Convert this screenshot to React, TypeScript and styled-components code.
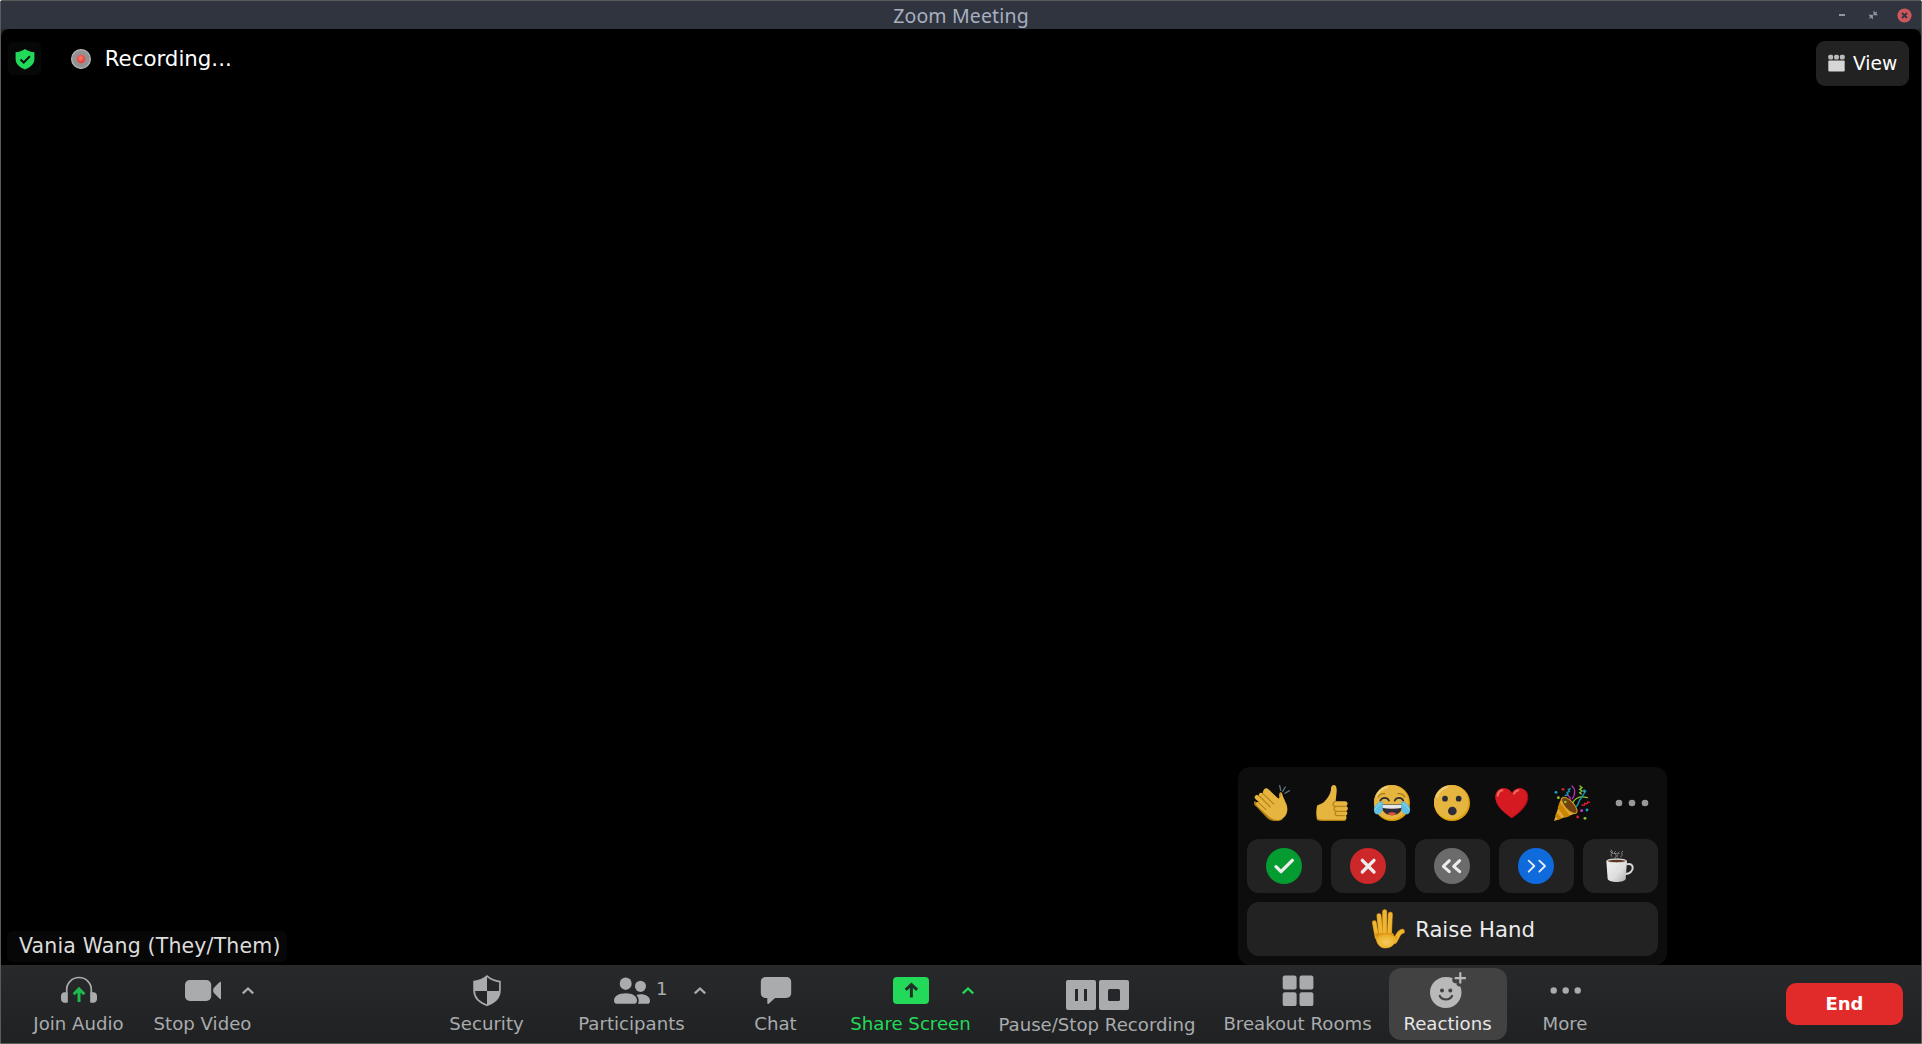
import React from 'react';
import styled, { createGlobalStyle } from 'styled-components';

const sans = '"DejaVu Sans", Verdana, sans-serif';
const GREY = '#a9abad';
const GREEN = '#23d959';

const GlobalStyle = createGlobalStyle`
  * { box-sizing: border-box; }
  body { margin: 0; background: #fff; overflow: hidden; }
  svg { display: block; flex: none; }
  button { font: inherit; color: inherit; border: 0; padding: 0; background: none; }
`;

const Window = styled.div`
  display: flex;
  flex-direction: column;
  width: 1922px;
  height: 1044px;
  border: 1px solid #5a5a5a;
  border-radius: 2px 2px 0 0;
  background: #26282a;
  font-family: ${sans};
  position: relative;
`;

const TitleBar = styled.header`
  display: grid;
  grid-template-columns: 1fr auto 1fr;
  align-items: center;
  height: 28px;
  flex: none;
  background: #30343f;
`;

const Title = styled.h1`
  grid-column: 2;
  margin: 0;
  padding-top: 1px;
  font: 400 19.5px/27px "Noto Sans", "Open Sans", sans-serif;
  letter-spacing: 0.15px;
  color: #a7b0c0;
`;

const WindowControls = styled.div`
  display: flex;
  justify-content: flex-end;
  align-items: center;
  gap: 17px;
  padding-right: 9px;
`;

const Stage = styled.main`
  flex: 1;
  display: flex;
  flex-direction: column;
  justify-content: space-between;
  background: #000;
  border-radius: 8px 8px 0 0;
`;

const StageTop = styled.div`
  display: flex;
  align-items: flex-start;
  padding: 12px 12px 0 7px;
`;

const ShieldBadge = styled.div`
  display: flex;
  align-items: center;
  justify-content: center;
  width: 33px;
  height: 33px;
  margin-top: 1px;
  border-radius: 5px;
  background: #060707;
`;

const RecordingStatus = styled.div`
  display: flex;
  align-items: center;
  gap: 13px;
  margin: 3px 0 0 30px;
  font-size: 21.33px;
  line-height: 30px;
  color: #fff;
`;

const RecordingText = styled.span`
  padding-left: 0.7px;
`;

const ViewButton = styled.button`
  display: flex;
  align-items: center;
  gap: 8px;
  width: 93px;
  height: 45px;
  margin-left: auto;
  padding-left: 12px;
  border-radius: 9px;
  background: #222;
  color: #fff;
  font-size: 18.67px;

  svg { margin-bottom: 1px; }
`;

const NameTag = styled.div`
  align-self: flex-start;
  height: 31px;
  margin: 0 0 3px 6px;
  padding: 0 6px 0 12px;
  border-radius: 6px;
  background: #070707;
  color: #dcdcdc;
  font-size: 20.5px;
  line-height: 31px;
  letter-spacing: 0.16px;
`;

const Toolbar = styled.footer`
  display: flex;
  align-items: flex-start;
  flex: none;
  height: 78px;
  padding: 3px 18px 0 19px;
  background: linear-gradient(#28292b, #1f2122);
`;

const Item = styled.button<{ $w: number; $gap?: number; $active?: boolean; $tone?: string; $drop?: number }>`
  display: flex;
  flex-direction: column;
  align-items: center;
  flex: none;
  width: ${p => p.$w}px;
  height: 72px;
  margin-left: ${p => p.$gap ?? 0}px;
  padding-top: ${p => 4 + (p.$drop ?? 0)}px;
  border-radius: 12px;
  background: ${p => (p.$active ? '#424242' : 'transparent')};
  color: ${p => p.$tone ?? '#a9abad'};
`;

const IconRow = styled.span`
  display: grid;
  grid-template-columns: 1fr auto 1fr;
  align-items: center;
  width: 100%;
  height: 36px;
`;

const IconSlot = styled.span`
  grid-column: 2;
`;

const Aside = styled.span<{ $pad: number }>`
  display: flex;
  align-items: center;
  padding-left: ${p => p.$pad}px;
`;

const Count = styled.span`
  width: 38px;
  font-size: 18.2px;
  line-height: 36px;
  margin-top: -3px;
  text-align: left;
`;

const Label = styled.span<{ $tight?: boolean }>`
  margin-top: ${p => (p.$tight ? 2 : 5)}px;
  padding-right: 1px;
  font-size: 18.15px;
  line-height: 22px;
  white-space: nowrap;
`;

const EndButton = styled.button`
  width: 117px;
  height: 42px;
  margin: 15px 0 0 auto;
  padding-bottom: 2px;
  border-radius: 10px;
  background: #e12a2a;
  color: #fff;
  font-size: 18px;
  font-weight: 700;
`;

const ReactionsMenu = styled.section`
  position: absolute;
  left: 1237px;
  top: 766px;
  width: 429px;
  height: 198px;
  padding: 9px;
  display: flex;
  flex-direction: column;
  gap: 9px;
  border-radius: 12px;
  background: #0d0d0d;
`;

const EmojiRow = styled.div`
  display: flex;
  justify-content: space-between;
  align-items: center;
  height: 54px;
  padding: 0 8px 0 7px;
`;

const FeedbackRow = styled.div`
  display: flex;
  gap: 9px;
`;

const Tile = styled.button<{ $wide?: boolean }>`
  display: flex;
  align-items: center;
  justify-content: center;
  gap: 9px;
  width: ${p => (p.$wide ? 411 : 75)}px;
  height: 54px;
  padding: ${p => (p.$wide ? '0 0 0 2px' : '0 1px 0 0')};
  border-radius: 12px;
  background: #222;
  color: #ececec;
  font-size: 21.2px;
`;

/* ---------- window and stage icons ---------- */

const Minimise = () => (
  <svg width="14" height="14"><rect x="4" y="6" width="6" height="2" fill="#8f95a3" /></svg>
);
const Restore = () => (
  <svg width="14" height="14" fill="#8f95a3">
    <path d="M7.500 2.500V7.200h4.500L10.200 5.200l1-1-.8-.8-1 1Z" />
    <path d="M2.500 6.800h4.400v4.700L5 9.600l-1.200 1.200-.8-.8L4.200 8.800Z" />
  </svg>
);
const Close = () => (
  <svg width="15" height="15">
    <circle cx="7.500" cy="7.500" r="7.100" fill="#cc575d" />
    <path d="m5 5 5 5m0-5-5 5" stroke="#30343f" strokeWidth="1.800" />
  </svg>
);
const ShieldCheck = () => (
  <svg width="20" height="22" viewBox="0 0 20 22">
    <path d="M10 1C7.500 3 4 4.200.6 4.200V11c0 5 4 8.500 9.400 10.400C15.400 19.500 19.400 16 19.400 11V4.200C16 4.200 12.500 3 10 1Z" fill={GREEN} />
    <path d="m5.500 11.500 3.200 3 6.200-6.200" fill="none" stroke="#07130b" strokeWidth="2" />
  </svg>
);
const RecordDot = () => (
  <svg width="20" height="20" viewBox="0 0 20 20">
    <defs>
      <radialGradient id="rec" cx=".45" cy=".4" r=".6">
        <stop offset="0" stopColor="#ff7a6c" /><stop offset="1" stopColor="#e8392f" />
      </radialGradient>
    </defs>
    <circle cx="10" cy="10" r="9.400" fill="#929292" stroke="#b9b9b9" strokeWidth="1.200" />
    <circle cx="10" cy="10" r="4.200" fill="url(#rec)" />
  </svg>
);
const ViewIcon = () => (
  <svg width="17" height="18" viewBox="0 0 17 18" fill="#d6d6d6">
    <rect x=".3" y=".8" width="4.800" height="4.800" rx="1.500" fill="#bbb" />
    <rect x="6.100" y=".8" width="4.800" height="4.800" rx="1.500" fill="#bbb" />
    <rect x="11.900" y=".8" width="4.800" height="4.800" rx="1.500" fill="#bbb" />
    <rect x=".3" y="6.500" width="16.400" height="10.900" rx="1" />
  </svg>
);

/* ---------- toolbar icons ---------- */

const Icon = ({ children, w = 36 }: { children: React.ReactNode; w?: number }) => (
  <svg width={w} height="36" viewBox={`0 0 ${w} 36`} fill={GREY}>{children}</svg>
);

const Chevron = () => (
  <svg width="12" height="36" viewBox="0 0 12 36">
    <path d="m.8 21.300 5.200-4.800 5.200 4.800" fill="none" stroke="currentColor" strokeWidth="2.300" />
  </svg>
);

const AudioIcon = () => (
  <Icon>
    <path d="M5.700 30V17.500a12.300 12 0 0 1 24.600 0V30" fill="none" stroke={GREY} strokeWidth="1.700" />
    <path d="M6.600 20.300v10.400H3.500C1.500 30.700 0 29 0 27v-3c0-2 1.500-3.700 3.500-3.700ZM29.400 20.300v10.400h3.100c2 0 3.500-1.700 3.500-3.700v-3c0-2-1.500-3.700-3.500-3.700Z" />
    <path d="M18 30V17M12.700 22.200 18 16.900l5.300 5.300" fill="none" stroke="#20b94e" strokeWidth="3" />
  </Icon>
);
const VideoIcon = () => (
  <Icon>
    <rect x="0" y="8" width="26.200" height="21" rx="4.800" />
    <path d="M28.200 17.300c0-.6.300-1.100.8-1.500l5.400-5.500c.8-.8 1.600-.7 1.600.2v15.800c0 1-.8 1.100-1.600.3L29 21.100c-.5-.4-.8-.9-.8-1.500Z" />
  </Icon>
);
const SecurityIcon = () => (
  <Icon>
    <path d="M18 4.200c-3.500 3-8 4.900-12.900 5.400v8.700c0 7 5 12.200 12.900 15 7.900-2.800 12.900-8 12.900-15V9.600C26 9.100 21.500 7.200 18 4.200Z" fill="none" stroke={GREY} strokeWidth="1.700" />
    <path d="M18 4v15H5V9.600C10 9.100 14.500 7 18 4ZM18 19h13c0 7-5 11.700-13 14.500Z" />
  </Icon>
);
const PeopleIcon = () => (
  <Icon>
    <ellipse cx="11.700" cy="11.700" rx="6" ry="6.200" />
    <ellipse cx="26.500" cy="14.300" rx="5.500" ry="5.600" />
    <path d="M0 28.500C0 24 5 21.200 11.700 21.200S23 24 23 28.500c0 2-1 3.300-2.600 3.300H2.600C1 31.800 0 30.500 0 28.500ZM22.300 23c1.500-.6 2.700-.8 4.300-.8 5.500 0 9.400 2.600 9.400 6.500 0 2-.8 3.100-2.500 3.100h-9.700c.7-1 .9-2 .9-3.300 0-2.200-.8-4-2.400-5.500Z" />
  </Icon>
);
const ChatIcon = () => (
  <Icon>
    <path d="M8 5h20c3.500 0 5.200 2 5.200 5.200v10.600c0 3.200-1.700 5.200-5.200 5.200H17l-6 5.600c-1 .9-1.700.6-1.700-.6V26H8c-3.500 0-5.200-2-5.200-5.200V10.200C2.800 7 4.500 5 8 5Z" />
  </Icon>
);
const ShareIcon = () => (
  <Icon>
    <rect x="0" y="5" width="36" height="27" rx="4" fill={GREEN} />
    <path d="M18.400 25.500V13M12.700 17.900l5.700-5.400 5.700 5.400" fill="none" stroke="#22302a" strokeWidth="3" />
  </Icon>
);
const PauseStopIcon = () => (
  <Icon w={63}>
    <rect x="0" y="4" width="30" height="30" rx="2" />
    <rect x="33" y="4" width="30" height="30" rx="2" />
    <path d="M10.500 13v12M19.500 13v12" stroke="#25272a" strokeWidth="3" />
    <rect x="42" y="13" width="12" height="12" rx="1.500" fill="#25272a" />
  </Icon>
);
const RoomsIcon = () => (
  <Icon>
    {[[2.700, 3.500], [19.500, 3.500], [2.700, 20.200], [19.500, 20.200]].map(([x, y]) => (
      <rect key={`${x}-${y}`} x={x} y={y} width="13.900" height="13.900" rx="2.200" />
    ))}
  </Icon>
);
const ReactionIcon = () => (
  <svg width="36" height="36" viewBox="0 0 36 36" fill="#b9b9b9">
    <path d="M22.700 6.200A16 16 0 0 0 15.700 5C7 5 0 12 0 20.400S7 36 15.700 36s15.800-6.900 15.800-15.600c0-2.300-.5-4.400-1.300-6.200-1 .4-2 .3-2.800-.4-.8-.6-1-1.500-.8-2.600-1.600.2-3-.1-3.700-1.200-.8-1.200-.9-2.500-.2-3.800Z" />
    <circle cx="12" cy="18.500" r="2" fill="#424242" />
    <circle cx="20.300" cy="18.500" r="2" fill="#424242" />
    <path d="M9.800 24c2.200 4.600 10 4.600 12.200 0" fill="none" stroke="#424242" strokeWidth="2.200" strokeLinecap="round" />
    <path d="M30.300.3v11.200M24.700 6.200h11.200" stroke="#b9b9b9" strokeWidth="2.200" />
  </svg>
);
const MoreIcon = () => (
  <Icon>{[5.700, 17.700, 29.700].map(x => <circle key={x} cx={x} cy="18.500" r="3.200" />)}</Icon>
);

/* ---------- reaction emoji ---------- */

const Emoji = ({ children }: { children: React.ReactNode }) => (
  <svg width="36" height="36" viewBox="0 0 108 108">{children}</svg>
);

const Clap = () => (
  <Emoji>
    <path d="M2 48c-5 8 0 14 6 18l32 34c12 10 35 12 46 3l-30-20Z" fill="#b47d10" />
    <path d="M31 12c5-5 10-2 14 2l26 25c3 2 5 1 5-3-1-8 0-13 4-14 4 0 5 4 6 10l12 27c5 17 1 31-10 40-13 9-30 8-42-3L10 63c-8-8-1-14 5-11-6-7-15-10-13-17 2-6 9-7 13-2-2-8 5-13 11-7 0-5 2-10 5-14Z" fill="#e6b53f" />
    <path d="m16 33 33 33M27 26l32 31M13 53l23 21" stroke="#b98416" strokeWidth="3.500" fill="none" strokeLinecap="round" />
    <path d="M74 42c4-4 4-12 6-18" stroke="#b98416" strokeWidth="3" fill="none" />
    <path d="m77 1 3 15M94 6l-8 13M106 17l-13 8" stroke="#63808c" strokeWidth="3.500" strokeLinecap="round" />
  </Emoji>
);
const Thumb = () => (
  <Emoji>
    <path d="M9 61c-3 14-3 32 0 44 12 5 28 3 39 3h40c7 0 10-5 8-10l-30-8L30 60Z" fill="#b47d10" />
    <path d="M53 4c4-6 12-5 14 3 3 11-1 24-2 42h28c9 0 10 11 3 14 8 3 7 13 0 15 6 3 5 12-1 14 5 4 2 12-4 12H44c-10 0-24 1-34-3-3-11-3-25 0-38 3-5 13-5 20-12C42 39 49 27 51 14c0-4 0-7 2-10Z" fill="#e6b53f" />
    <path d="M64 49c-10 4-9 14 0 15h31M66 64c-9 3-7 14 2 15h26M67 79c-6 4-5 12 2 13h22" fill="none" stroke="#b98416" strokeWidth="4" strokeLinecap="round" />
  </Emoji>
);
const FaceBase = () => (
  <>
    <circle cx="54" cy="54" r="54" fill="#dfa006" />
    <circle cx="51.500" cy="51.500" r="51.500" fill="#e6b53f" />
    <path d="M9 35C14 20 25 10 39 6" stroke="#f2d895" strokeWidth="6" strokeLinecap="round" opacity=".7" fill="none" />
  </>
);
const Joy = () => (
  <Emoji>
    <FaceBase />
    <path d="M12 36c4-8 12-11 20-10M72 26c9-1 16 2 20 10" fill="none" stroke="#a97810" strokeWidth="4" strokeLinecap="round" />
    <path d="M19 47c6-11 20-11 26 0M62 47c6-11 20-11 26 0" fill="none" stroke="#2d2b35" strokeWidth="5" strokeLinecap="round" />
    <path d="M23 58h62c1 20-11 33-31 33S22 78 23 58Z" fill="#2d2b38" />
    <path d="M24 59h60l-2 10c-18 3-39 3-56 0Z" fill="#e5e6e6" />
    <path d="M40 87c5-7 23-7 28 0-8 5-20 5-28 0Z" fill="#d9523e" />
    <path d="M26 49C15 50 2 60 0 71c-1 11 4 18 13 17 14-2 14-21 13-39ZM82 49c11 1 24 11 26 22 1 11-4 18-13 17-14-2-14-21-13-39Z" fill="#5fbfe4" />
    <path d="M21 56c-9 4-16 11-17 18M87 56c9 4 16 11 17 18" fill="none" stroke="#8fd9ef" strokeWidth="3" />
  </Emoji>
);
const Wow = () => (
  <Emoji>
    <FaceBase />
    <circle cx="33" cy="41" r="8.500" fill="#2d2b38" />
    <circle cx="74" cy="41" r="8.500" fill="#2d2b38" />
    <circle cx="55" cy="78" r="13" fill="#2d2b38" />
  </Emoji>
);
const Heart = () => (
  <Emoji>
    <path d="M54 100C27 82 4 60 4 37 4 20 15 10 29 10c11 0 20 5 25 15C59 15 67 10 78 10c14 0 25 10 25 27 0 23-22 45-49 63Z" fill="#a90f18" />
    <path d="M52 98C26 80 4 59 4 37 4 20 15 10 29 10c11 0 20 5 25 14 4-9 13-14 23-14 12 0 22 9 22 26 0 22-20 44-47 62Z" fill="#d51a22" />
    <path d="M11 32c1-8 6-14 14-16M60 26c3-6 8-9 13-10" fill="none" stroke="#ef7060" strokeWidth="6" strokeLinecap="round" />
  </Emoji>
);
const dots: [number, number, string][] = [
  [6, 22, '#19a5bf'], [27, 13, '#d81e30'], [13, 38, '#8ec62d'], [83, 77, '#d630c8'],
  [99, 75, '#19a5bf'], [71, 96, '#d81e30'], [93, 100, '#8ec62d'], [91, 18, '#19a5bf'],
];
const Party = () => (
  <Emoji>
    <path d="m22 38 45 47L0 108Z" fill="#e2a637" />
    <path d="m17 51 31 42-15 5-22-30ZM7 82l16 18-10 5-9-13Z" fill="#c98400" />
    <ellipse cx="46" cy="61" rx="13" ry="31" transform="rotate(-43 46 61)" fill="#70400f" stroke="#d69a1f" strokeWidth="3" />
    <g fill="none" strokeWidth="4" strokeLinecap="round">
      <path d="M54 3c10 8 11 24 2 37M50 42c-4-9-8-9-11-13" stroke="#c02ec0" />
      <path d="M57 52c7-12 21-20 43-14M78 3l6 5-7 5 7 5-7 5 5 4" stroke="#8ec62d" />
      <path d="M67 65c9-10 7-20 14-25 4-4 8-15 14-21M34 32l8-4-3-6 7-2-3-6 6-3" stroke="#149bb8" />
      <path d="m84 60 7 1 1-6 7 2 2-6 7 1" stroke="#d81e30" />
    </g>
    {dots.map(([x, y, c]) => <circle key={`${x}-${y}`} cx={x} cy={y} r="4.300" fill={c} />)}
    <circle cx="34" cy="51" r="4" fill="#8ec62d" />
  </Emoji>
);
const EmojiMore = () => (
  <Emoji>{[15, 54, 93].map(x => <circle key={x} cx={x} cy="54" r="10" fill="#999" />)}</Emoji>
);

const Disc = ({ fill, d, stroke = 8 }: { fill: string; d: string; stroke?: number }) => (
  <Emoji>
    <circle cx="54" cy="54" r="54" fill={fill} />
    <path d={d} fill="none" stroke="#ececec" strokeWidth={stroke} strokeLinecap="round" strokeLinejoin="round" />
  </Emoji>
);

const Coffee = () => (
  <Emoji>
    <defs>
      <linearGradient id="cup" x1="0" x2="1" y2="1">
        <stop offset="0" stopColor="#f2f2f2" /><stop offset=".6" stopColor="#dedede" /><stop offset="1" stopColor="#a9a9a9" />
      </linearGradient>
    </defs>
    <path d="M73 49c26-8 26 28-3 29" fill="none" stroke="#d8d8d8" strokeWidth="6" />
    <path d="M13 39c2-10 60-10 62 0l-4 54c-4 12-50 12-54 0Z" fill="url(#cup)" />
    <ellipse cx="44" cy="39" rx="28" ry="5" fill="#5b3626" stroke="#f0f0f0" strokeWidth="2" />
    <path d="M31 27c-11-8 7-10-4-22M37 30c17-9-9-12 4-20M47 28c-8-8 9-9 3-14M55 27c13-7-3-10 8-18M24 10c8 8 22 10 28 2" fill="none" stroke="#868686" strokeWidth="3" />
  </Emoji>
);

const fingers: [string, number][] = [
  ['M7 41 15 84', 12], ['M21 20 27 80', 13], ['M38 8v70', 13], ['M55 16 52 80', 13],
  ['M91 67C79 69 77 84 68 97', 13],
];
const palm = 'M9 72h50c4 0 5 4 6 9l12 2c-7 19-16 34-38 34-20 0-27-19-30-45Z';
const Hand = () => (
  <svg width="34" height="40" viewBox="0 0 102 120">
    <defs>
      <radialGradient id="palm" cx=".5" cy=".6" r=".6">
        <stop offset="0" stopColor="#f6cb5c" /><stop offset=".7" stopColor="#ecb22d" /><stop offset="1" stopColor="#dd9413" />
      </radialGradient>
    </defs>
    {fingers.map(([d, w]) => (
      <path key={d} d={d} fill="none" stroke="#c9830e" strokeWidth={w + 2} strokeLinecap="round" />
    ))}
    <path d={palm} fill="#c9830e" stroke="#c9830e" strokeWidth="2" />
    {fingers.map(([d, w]) => (
      <path key={d} d={d} fill="none" stroke="#edb634" strokeWidth={w - 1.500} strokeLinecap="round" />
    ))}
    <path d={palm} fill="url(#palm)" />
  </svg>
);

export default function App() {
  return (
    <>
      <GlobalStyle />
      <Window>
        <TitleBar>
          <Title>Zoom Meeting</Title>
          <WindowControls><Minimise /><Restore /><Close /></WindowControls>
        </TitleBar>

        <Stage>
          <StageTop>
            <ShieldBadge><ShieldCheck /></ShieldBadge>
            <RecordingStatus><RecordDot /><RecordingText>Recording...</RecordingText></RecordingStatus>
            <ViewButton><ViewIcon />View</ViewButton>
          </StageTop>
          <NameTag>Vania Wang (They/Them)</NameTag>
        </Stage>

        <Toolbar>
          <Item $w={118}>
            <IconRow><IconSlot><AudioIcon /></IconSlot></IconRow>
            <Label>Join Audio</Label>
          </Item>
          <Item $w={130}>
            <IconRow><IconSlot><VideoIcon /></IconSlot><Aside $pad={21}><Chevron /></Aside></IconRow>
            <Label>Stop Video</Label>
          </Item>
          <Item $w={120} $gap={159}>
            <IconRow><IconSlot><SecurityIcon /></IconSlot></IconRow>
            <Label>Security</Label>
          </Item>
          <Item $w={150} $gap={10}>
            <IconRow><IconSlot><PeopleIcon /></IconSlot><Aside $pad={6}><Count>1</Count><Chevron /></Aside></IconRow>
            <Label>Participants</Label>
          </Item>
          <Item $w={80} $gap={29}>
            <IconRow><IconSlot><ChatIcon /></IconSlot></IconRow>
            <Label>Chat</Label>
          </Item>
          <Item $w={130} $gap={30} $tone={GREEN}>
            <IconRow><IconSlot><ShareIcon /></IconSlot><Aside $pad={33}><Chevron /></Aside></IconRow>
            <Label>Share Screen</Label>
          </Item>
          <Item $w={231} $gap={6} $drop={4}>
            <IconRow><IconSlot><PauseStopIcon /></IconSlot></IconRow>
            <Label $tight>Pause/Stop Recording</Label>
          </Item>
          <Item $w={160} $gap={5}>
            <IconRow><IconSlot><RoomsIcon /></IconSlot></IconRow>
            <Label>Breakout Rooms</Label>
          </Item>
          <Item $w={118} $gap={11} $active $tone="#e6e6e6">
            <IconRow><IconSlot><ReactionIcon /></IconSlot></IconRow>
            <Label>Reactions</Label>
          </Item>
          <Item $w={81} $gap={18}>
            <IconRow><IconSlot><MoreIcon /></IconSlot></IconRow>
            <Label>More</Label>
          </Item>
          <EndButton>End</EndButton>
        </Toolbar>

        <ReactionsMenu>
          <EmojiRow>
            <Clap /><Thumb /><Joy /><Wow /><Heart /><Party /><EmojiMore />
          </EmojiRow>
          <FeedbackRow>
            <Tile><Disc fill="#049b31" d="m30 56 15 15 34-34" stroke={10} /></Tile>
            <Tile><Disc fill="#cc2829" d="m37 37 35 35m0-35L37 72" stroke={10} /></Tile>
            <Tile><Disc fill="#6b6b6b" d="M46 38 28 55l18 16M77 38 59 55l18 16" stroke={9} /></Tile>
            <Tile><Disc fill="#0f6adc" d="m32 38 17 16-17 17M64 38l17 16-17 17" stroke={5.500} /></Tile>
            <Tile><Coffee /></Tile>
          </FeedbackRow>
          <Tile $wide><Hand />Raise Hand</Tile>
        </ReactionsMenu>
      </Window>
    </>
  );
}
